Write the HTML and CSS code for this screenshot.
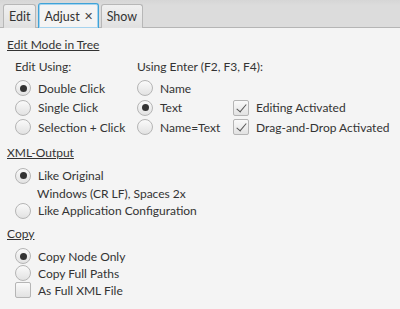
FILE: index.html
```html
<!DOCTYPE html>
<html lang="en">
<head>
    <meta charset="UTF-8">
    <title>Adjust</title>
    <link rel="stylesheet" href="styles.css">
</head>
<body>
    <div class="tab-bar">
        <div class="tab">Edit</div>
        <div class="tab active">Adjust <span class="close">&#x2715;</span></div>
        <div class="tab">Show</div>
    </div>

    <div class="content">
        <h2 class="heading">Edit Mode in Tree</h2>
        <div class="edit-mode">
            <div class="col-title">Edit Using:</div>
            <div class="col-title">Using Enter (F2, F3, F4):</div>
            <div></div>

            <div class="row"><span class="radio checked"></span>Double Click</div>
            <div class="row"><span class="radio"></span>Name</div>
            <div></div>

            <div class="row"><span class="radio"></span>Single Click</div>
            <div class="row"><span class="radio checked"></span>Text</div>
            <div class="row"><span class="check checked"></span>Editing Activated</div>

            <div class="row"><span class="radio"></span>Selection + Click</div>
            <div class="row"><span class="radio"></span>Name=Text</div>
            <div class="row"><span class="check checked"></span>Drag-and-Drop Activated</div>
        </div>

        <h2 class="heading">XML-Output</h2>
        <div class="group">
            <div class="row"><span class="radio checked"></span>Like Original</div>
            <div class="note">Windows (CR LF), Spaces 2x</div>
            <div class="row"><span class="radio"></span>Like Application Configuration</div>
        </div>

        <h2 class="heading">Copy</h2>
        <div class="group tight">
            <div class="row"><span class="radio checked"></span>Copy Node Only</div>
            <div class="row"><span class="radio"></span>Copy Full Paths</div>
            <div class="row"><span class="check"></span>As Full XML File</div>
        </div>
    </div>
</body>
</html>
```

FILE: styles.css
```css
* {
    margin: 0;
    padding: 0;
    box-sizing: border-box;
}

body {
    font-family: Lato, 'Noto Sans', sans-serif;
    font-size: 12px;
    color: #333;
    background: #f4f4f4;
    width: 400px;
    height: 309px;
    overflow: hidden;
}

/* Tabs */
.tab-bar {
    height: 28px;
    background: linear-gradient(#d6d6d6, #dcdcdc 20%);
    border-bottom: 1px solid #b5b5b5;
    display: flex;
    align-items: flex-end;
    padding-left: 3px;
    gap: 1px;
}

.tab {
    height: 24px;
    padding: 0 5px;
    border: 1px solid #b7b7b7;
    border-bottom: none;
    border-radius: 3px 3px 0 0;
    background: linear-gradient(#f0f0f0, #e0e0e0);
    display: flex;
    align-items: center;
    font-size: 12.5px;
    margin-bottom: -1px;
}

.tab.active {
    background: #f4f4f4;
    border: 1px solid #3ea3d8;
    border-bottom: none;
    height: 25px;
    margin: 0 1px -1px;
    box-shadow: inset 0 0 0 1px #a6d3ee;
}

.close {
    font-size: 11px;
    margin-left: 4px;
    color: #444;
}

/* Content */
.content {
    padding: 8px 7px;
}

.heading {
    font-size: 12px;
    font-weight: normal;
    text-decoration: underline;
    line-height: 18px;
}

.edit-mode {
    display: grid;
    grid-template-columns: 122px 96px auto;
    grid-template-rows: 20px repeat(3, 19.5px);
    margin: 4px 0 7px 8px;
    white-space: nowrap;
}

.col-title {
    line-height: 18px;
}

.row {
    display: flex;
    align-items: center;
    height: 20px;
    gap: 7px;
    white-space: nowrap;
}

.group {
    margin: 4px 0 4px 8px;
}

.group.tight {
    margin-top: 5px;
}

.group.tight .row {
    height: 17px;
}

.note {
    padding-left: 22px;
    line-height: 15px;
}

.radio {
    width: 16px;
    height: 16px;
    border-radius: 50%;
    border: 1px solid #b5b5b5;
    background: linear-gradient(#fafafa, #e2e2e2);
    display: flex;
    align-items: center;
    justify-content: center;
    flex-shrink: 0;
}

.radio.checked::after {
    content: '';
    width: 7px;
    height: 7px;
    border-radius: 50%;
    background: #333;
}

.check {
    width: 16px;
    height: 16px;
    border-radius: 2px;
    border: 1px solid #b5b5b5;
    background: linear-gradient(#fafafa, #e2e2e2);
    position: relative;
    flex-shrink: 0;
}

.check.checked::after {
    content: '';
    position: absolute;
    left: 5px;
    top: 1px;
    width: 4px;
    height: 9px;
    border: solid #555;
    border-width: 0 1.5px 1.5px 0;
    transform: rotate(40deg);
}
```
